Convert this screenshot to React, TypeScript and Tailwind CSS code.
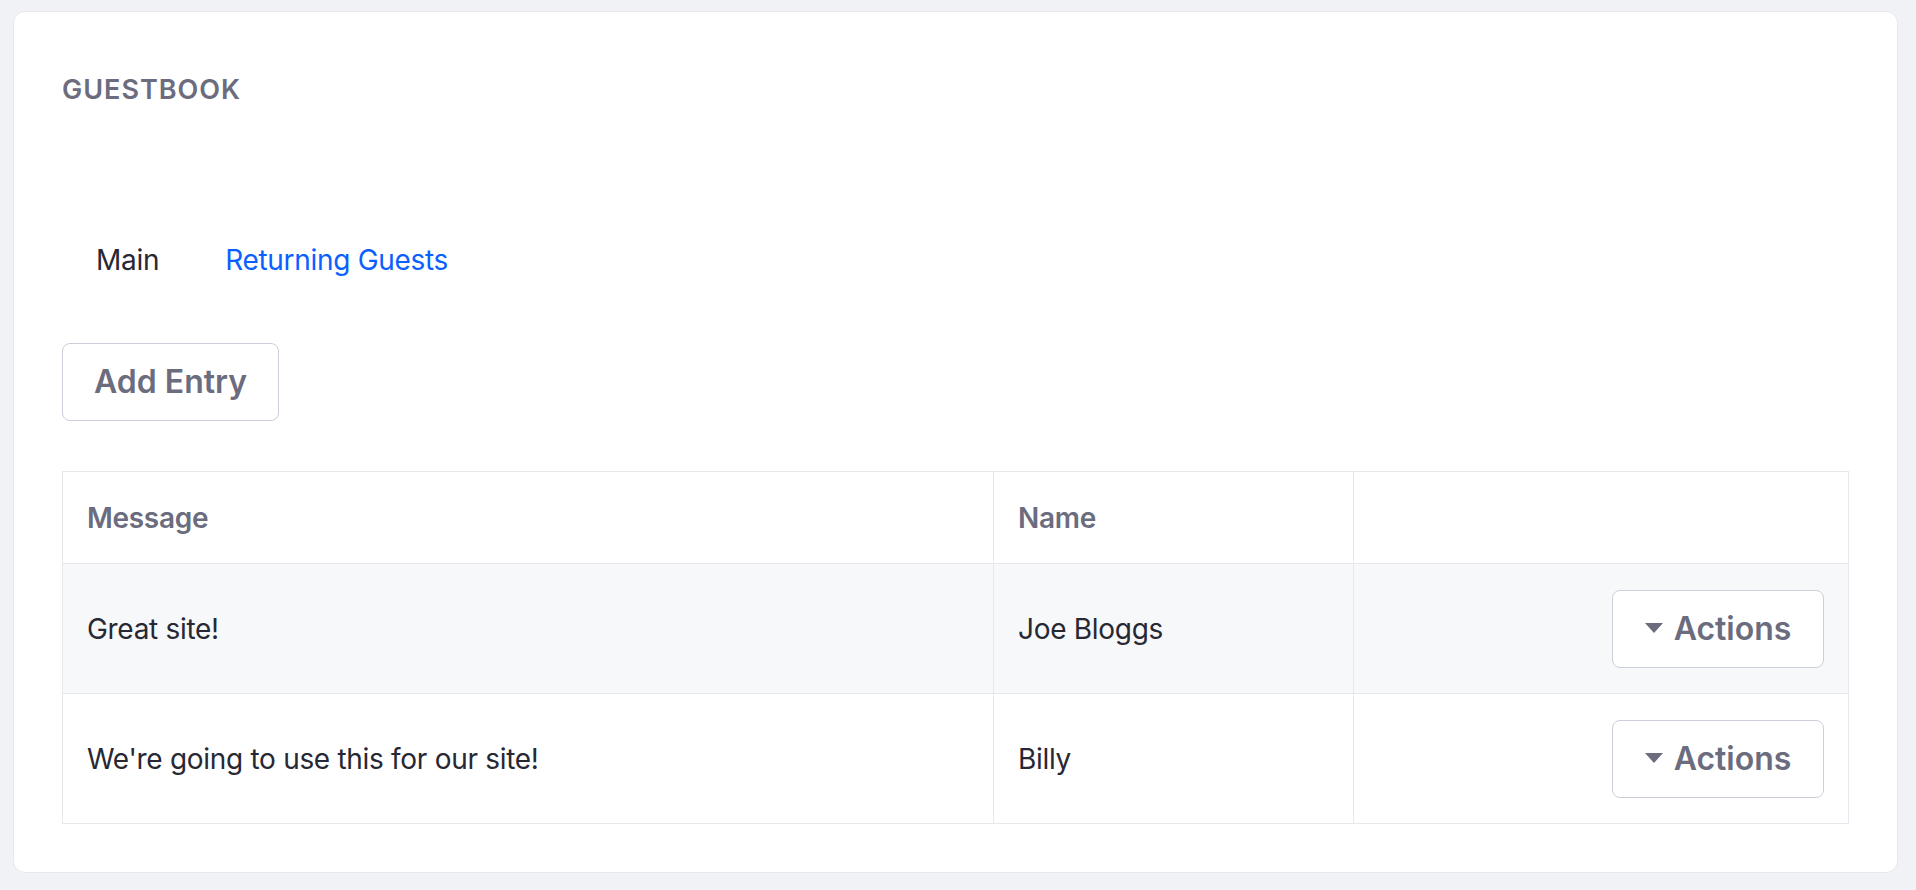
const entries = [
  { message: 'Great site!', name: 'Joe Bloggs' },
  { message: "We're going to use this for our site!", name: 'Billy' },
];

const Caret = () => (
  <svg width="18" height="11" viewBox="0 0 18 11" className="shrink-0">
    <polygon points="0,0 18,0 9,10" fill="currentColor" />
  </svg>
);

const App = () => {
  const cell = 'flex items-center border-r border-b border-[#e7e7ed] pl-[24px]';

  return (
    <div className="h-[890px] bg-[#f1f2f5] pt-[11px] pr-[18px] pb-[17px] pl-[13px] font-['Inter',sans-serif]">
      <div className="h-full rounded-[12px] border border-[#e7e7ed] bg-white px-[48px] pt-[64px]">
        <h2 className="text-[27px] leading-[28px] font-semibold tracking-[1px] text-[#6b6c7e] uppercase">
          Guestbook
        </h2>

        <nav className="mt-[142px] flex text-[28px] leading-[28px] tracking-[-0.3px]">
          <a className="pr-[32px] pl-[34px] text-[#272833]">Main</a>
          <a className="pl-[34px] text-[#0b5fff]">Returning Guests</a>
        </nav>

        <button
          type="button"
          className="mt-[69px] flex h-[78px] items-center rounded-[8px] border border-[#cdced9] bg-white px-[31px] text-[32px] font-semibold text-[#6b6c7e]"
        >
          Add Entry
        </button>

        <div className="mt-[50px] border-t border-l border-[#e7e7ed] text-[28px] leading-[28px] tracking-[-0.3px]">
          <div className="grid h-[92px] grid-cols-[931px_360px_1fr]">
            <div className={`${cell} font-semibold text-[#6b6c7e]`}>Message</div>
            <div className={`${cell} font-semibold text-[#6b6c7e]`}>Name</div>
            <div className={cell} />
          </div>
          {entries.map((entry, i) => (
            <div
              key={entry.name}
              className={`grid h-[130px] grid-cols-[931px_360px_1fr] text-[#272833] ${
                i === 0 ? 'bg-[#f7f8f9]' : 'bg-white'
              }`}
            >
              <div className={cell}>{entry.message}</div>
              <div className={cell}>{entry.name}</div>
              <div className="flex items-center justify-end border-r border-b border-[#e7e7ed] pr-[24px]">
                <button
                  type="button"
                  className="flex h-[78px] w-[212px] items-center justify-center gap-[11px] rounded-[8px] border border-[#cdced9] bg-white text-[32px] font-semibold tracking-normal text-[#6b6c7e]"
                >
                  <Caret />
                  Actions
                </button>
              </div>
            </div>
          ))}
        </div>
      </div>
    </div>
  );
};

export default App;
